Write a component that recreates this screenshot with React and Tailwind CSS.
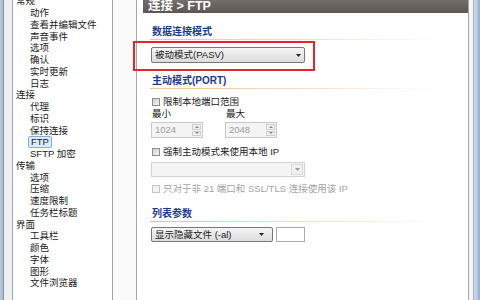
const FONT = { fontFamily: '"Liberation Sans", "Noto Sans CJK SC", sans-serif' };

const TREE = [
  ["常规", 0], ["动作", 1], ["查看并编辑文件", 1], ["声音事件", 1], ["选项", 1], ["确认", 1],
  ["实时更新", 1], ["日志", 1], ["连接", 0], ["代理", 1], ["标识", 1], ["保持连接", 1],
  ["FTP", 1, true], ["SFTP 加密", 1], ["传输", 0], ["选项", 1], ["压缩", 1], ["速度限制", 1],
  ["任务栏标题", 1], ["界面", 0], ["工具栏", 1], ["颜色", 1], ["字体", 1], ["图形", 1], ["文件浏览器", 1],
];

function Heading({ children }) {
  return (
    <div className="ml-[15px]">
      <div className="h-[12px] leading-[12px] text-[10px] font-bold text-[#1d3a8e]">{children}</div>
      <div className="mt-[1px] -ml-[2px] h-px w-[290px] bg-gradient-to-r from-[#f3c18f] via-[#f8dcc0] to-transparent" />
    </div>
  );
}

function Check({ label, disabled }) {
  return (
    <div className="ml-[15px] flex items-center h-[12px]">
      <span
        className={`w-[8px] h-[8px] border ${
          disabled ? "border-[#c4c4c4] bg-[#f2f2f2]" : "border-[#8e8e8e] bg-gradient-to-br from-[#cfcfcf] to-[#f3f3f3]"
        }`}
      />
      <span className={`ml-[3px] text-[9.5px] leading-[12px] ${disabled ? "text-[#a3a3a3]" : "text-[#1a1a1a]"}`}>
        {label}
      </span>
    </div>
  );
}

function Arrow({ color = "#222" }) {
  return (
    <svg width="5" height="3" viewBox="0 0 5 3">
      <path d="M0 0h5L2.5 3z" fill={color} />
    </svg>
  );
}

function Spin({ value }) {
  return (
    <div className="w-[52px] h-[16px] border border-[#c9c9c9] bg-[#f4f4f4] flex">
      <span className="flex-1 pl-[3px] text-[9.5px] leading-[14px] text-[#9d9d9d]">{value}</span>
      <div className="w-[9px] my-[1px] mr-[1px] flex flex-col gap-px">
        <div className="flex-1 border border-[#cfcfcf] bg-[#efefef] flex items-center justify-center">
          <svg width="4" height="2" viewBox="0 0 4 2"><path d="M0 2h4L2 0z" fill="#8a8a8a" /></svg>
        </div>
        <div className="flex-1 border border-[#cfcfcf] bg-[#efefef] flex items-center justify-center">
          <svg width="4" height="2" viewBox="0 0 4 2"><path d="M0 0h4L2 2z" fill="#8a8a8a" /></svg>
        </div>
      </div>
    </div>
  );
}

export default function App() {
  return (
    <div className="w-[480px] h-[300px] overflow-hidden flex bg-[#f0f0f0] text-[#1a1a1a]" style={FONT}>
      {/* left window frame */}
      <div className="w-[3px] bg-gradient-to-r from-[#b9c9dc] to-[#a9bcd3]" />
      <div className="w-px bg-[#8a8f96]" />
      <div className="w-[8px] bg-[#eef0f2]" />

      {/* tree */}
      <div className="w-[101px] bg-white border-l border-r border-[#9ea3a8] overflow-hidden">
        <div className="-mt-[5px]">
          {TREE.map(([label, level, sel], i) => (
            <div key={i} className="h-[11.75px] flex items-center">
              {sel ? (
                <span className="ml-[15px] px-[2px] text-[9.5px] leading-[10px] border border-[#84acdd] bg-[#dcebfc] rounded-[2px]">
                  {label}
                </span>
              ) : (
                <span className={`text-[9.5px] leading-[11px] ${level ? "ml-[17px]" : "ml-[3px]"}`}>{label}</span>
              )}
            </div>
          ))}
        </div>
      </div>

      <div className="w-[23px] bg-[#fafafa]" />

      {/* content panel */}
      <div className="w-[333px] bg-white border-l border-r border-[#a7a7a7] relative">
        <div className="ml-[6px] h-[13px] bg-gradient-to-b from-[#736e6a] to-[#5c5754] flex items-center">
          <span className="ml-[5px] text-[12.5px] leading-[13px] font-bold text-white">连接 &gt; FTP</span>
        </div>

        <div className="mt-[13px]">
          <Heading>数据连接模式</Heading>
        </div>

        <div className="mt-[1px] -ml-[4px] w-[182px] h-[30px] border-2 border-[#e3262a] pl-[16px] pt-[4px] relative z-10">
          <div className="w-[154px] h-[16px] border border-[#777] rounded-[2px] bg-gradient-to-b from-[#f5f5f5] to-[#dcdcdc] flex items-center justify-between px-[3px]">
            <span className="text-[9.5px] leading-[14px]">被动模式(PASV)</span>
            <Arrow />
          </div>
        </div>

        <div className="mt-[4px]">
          <Heading>主动模式(PORT)</Heading>
        </div>

        <div className="mt-[7px]">
          <Check label="限制本地端口范围" />
        </div>

        <div className="ml-[15px] h-[12px] flex text-[9.5px] leading-[12px]">
          <span className="w-[74px]">最小</span>
          <span>最大</span>
        </div>

        <div className="mt-[2px] ml-[14px] flex gap-[22px]">
          <Spin value="1024" />
          <Spin value="2048" />
        </div>

        <div className="mt-[8px]">
          <Check label="强制主动模式来使用本地 IP" />
        </div>

        <div className="mt-[4px] ml-[14px] w-[154px] h-[15px] border border-[#d2d2d2] bg-[#f4f4f4] flex justify-end">
          <div className="w-[12px] m-px border border-[#dadada] bg-[#f0f0f0] flex items-center justify-center">
            <Arrow color="#9a9a9a" />
          </div>
        </div>

        <div className="mt-[6px]">
          <Check label="只对于非 21 端口和 SSL/TLS 连接使用该 IP" disabled />
        </div>

        <div className="mt-[13px]">
          <Heading>列表参数</Heading>
        </div>

        <div className="mt-[5px] ml-[14px] flex gap-[3px]">
          <div className="w-[122px] h-[15px] border border-[#777] rounded-[2px] bg-gradient-to-b from-[#f5f5f5] to-[#dcdcdc] flex items-center justify-between pl-[3px] pr-[8px]">
            <span className="text-[9.5px] leading-[13px]">显示隐藏文件 (-al)</span>
            <Arrow />
          </div>
          <div className="w-[29px] h-[15px] border border-[#abadb3] bg-white" />
        </div>
      </div>

      {/* right window frame */}
      <div className="w-[4px] bg-[#f6f6f6]" />
      <div className="w-px bg-[#b3b3b3]" />
      <div className="w-[4px] bg-gradient-to-r from-[#c9d9ec] to-[#b4c8e2]" />
      <div className="flex-1 bg-[#9fb4cf]" />
    </div>
  );
}
